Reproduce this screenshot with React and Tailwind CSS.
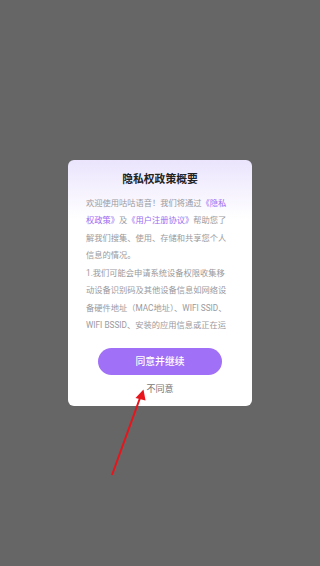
import React from "react";

export default function App() {
  return (
    <div
      className="relative w-[320px] h-[566px] bg-[#666666] flex items-center justify-center overflow-hidden"
      style={{ fontFamily: "Roboto, 'Noto Sans CJK SC', sans-serif" }}
    >
      <div className="w-[184px] h-[246px] rounded-[6px] bg-[linear-gradient(180deg,#ebe4fd_0%,#ffffff_24%)] flex flex-col items-center pt-[12px] pb-[10px]">
        <div className="h-[16px] leading-[16px] text-[10.8px] font-bold text-[#222222]">
          隐私权政策概要
        </div>
        <div className="mt-[7px] w-full pl-[18px] pr-[20px]">
          <div className="h-[140px] overflow-hidden text-[8.25px] leading-[17.43px] text-[#9a9a9e]">
            <p>
              欢迎使用咕咕语音！我们将通过<span className="text-[#9b6cf2]">《隐私权政策》</span>及<span className="text-[#9b6cf2]">《用户注册协议》</span>帮助您了解我们搜集、使用、存储和共享您个人信息的情况。
            </p>
            <p>
              1.我们可能会申请系统设备权限收集移动设备识别码及其他设备信息如网络设备硬件地址（MAC地址）、WIFI SSID、WIFI BSSID、安装的应用信息或正在运行的进程信息，用于保障账号和交易安全。
            </p>
          </div>
        </div>
        <button className="mt-[13px] w-[124px] h-[27px] rounded-full bg-[#a070f6] text-white text-[9.8px] font-medium leading-[27px]">
          同意并继续
        </button>
        <div className="mt-[7px] h-[14px] leading-[14px] text-[9px] text-[#777777]">
          不同意
        </div>
      </div>
      <svg
        className="absolute left-0 top-0 pointer-events-none"
        width="320"
        height="566"
        viewBox="0 0 320 566"
      >
        <line x1="112" y1="475" x2="140" y2="398" stroke="#e8141c" strokeWidth="2" />
        <polygon points="143.5,389.5 135.5,398 145.5,400.5" fill="#e8141c" />
      </svg>
    </div>
  );
}
